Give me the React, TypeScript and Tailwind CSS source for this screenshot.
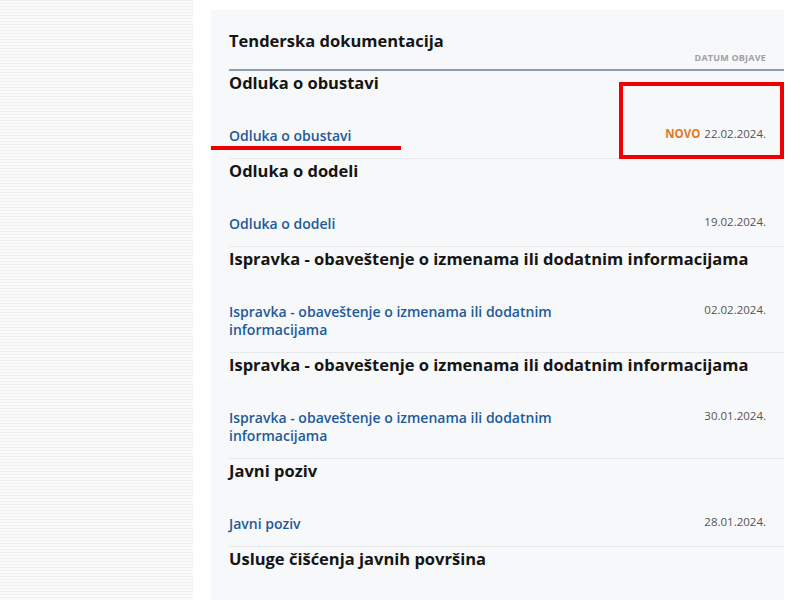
// @ts-nocheck
const groups = [
  { title: 'Odluka o obustavi', link: 'Odluka o obustavi', date: '22.02.2024.', isNew: true },
  { title: 'Odluka o dodeli', link: 'Odluka o dodeli', date: '19.02.2024.' },
  {
    title: 'Ispravka - obaveštenje o izmenama ili dodatnim informacijama',
    link: 'Ispravka - obaveštenje o izmenama ili dodatnim informacijama',
    date: '02.02.2024.',
  },
  {
    title: 'Ispravka - obaveštenje o izmenama ili dodatnim informacijama',
    link: 'Ispravka - obaveštenje o izmenama ili dodatnim informacijama',
    date: '30.01.2024.',
  },
  { title: 'Javni poziv', link: 'Javni poziv', date: '28.01.2024.' },
];

export default function App() {
  return (
    <div className="relative flex w-[800px] h-[600px] overflow-hidden bg-white font-['Open_Sans',sans-serif]">
      {/* Striped sidebar */}
      <div className="w-[193px] h-full shrink-0 bg-[repeating-linear-gradient(180deg,#efefef_0px,#efefef_1px,#fafafa_1px,#fafafa_3px)]" />

      {/* Documents panel */}
      <div className="ml-[18px] mt-[10px] w-[573px] bg-[#f7f8f9] pl-[18px]">
        <div className="border-b-2 border-[#8d9db0] pb-[6px]">
          <h2 className="text-[16.5px] leading-[24px] font-bold text-[#151515] pt-[19px]">Tenderska dokumentacija</h2>
          <div className="flex justify-end pr-[18px] text-[9px] leading-[10px] font-bold text-[#a0a0a0] tracking-[0.2px]">
            DATUM OBJAVE
          </div>
        </div>

        {groups.map((g, i) => (
          <div key={i} className="border-b border-[#e6e8ea]">
            <h3 className="text-[16.5px] leading-[24px] font-bold text-[#151515]">{g.title}</h3>
            <div className="mt-[32px] pb-[13px] flex justify-between items-start pr-[18px]">
              <a className="w-[350px] text-[14px] leading-[18px] font-semibold text-[#1d5a9a]">{g.link}</a>
              <span className="text-[11.5px] leading-[14px] text-[#555]">
                {g.isNew && <span className="font-bold text-[#e07a28] mr-[4px]">NOVO</span>}
                {g.date}
              </span>
            </div>
          </div>
        ))}

        <h3 className="text-[16.5px] leading-[24px] font-bold text-[#151515]">Usluge čišćenja javnih površina</h3>
        <div className="h-[60px]" />
      </div>

      {/* Annotations */}
      <div className="absolute left-[619px] top-[82px] w-[165px] h-[77px] border-4 border-[#f10000]" />
      <div className="absolute left-[211px] top-[146px] w-[190px] h-[4px] bg-[#f10000]" />
    </div>
  );
}
